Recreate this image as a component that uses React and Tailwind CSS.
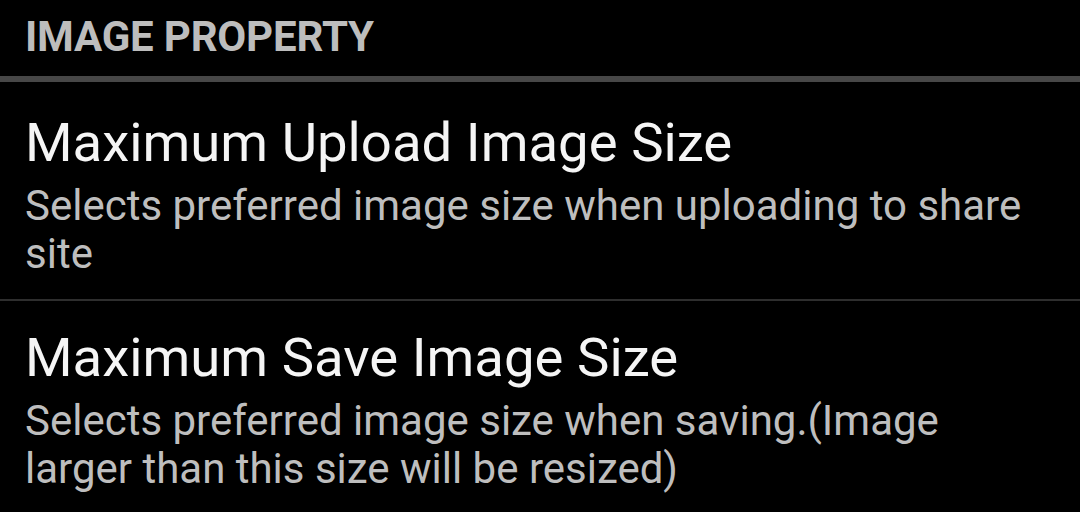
export default function App() {
  const items = [
    {
      title: 'Maximum Upload Image Size',
      summary: 'Selects preferred image size when uploading to share site',
    },
    {
      title: 'Maximum Save Image Size',
      summary: 'Selects preferred image size when saving.(Image larger than this size will be resized)',
    },
  ]

  return (
    <div className="h-[512px] w-[1080px] overflow-hidden bg-black" style={{ fontFamily: 'Roboto, sans-serif' }}>
      {/* category header */}
      <div className="flex h-[76px] items-center px-[25px] pb-[2px]">
        <span className="text-[42px] font-bold leading-none tracking-[-0.2px] text-[#bdbdbd]">IMAGE PROPERTY</span>
      </div>
      <div className="h-[6px] bg-[#474747]" />

      {items.map((item, i) => (
        <div key={item.title}>
          {i > 0 && <div className="h-[2px] bg-[#2e2e2e]" />}
          <div className={i === 0 ? 'pl-[25px] pr-[30px] pt-[27px] pb-[21px]' : 'pl-[25px] pr-[30px] pt-[23px] pb-[21px]'}>
            <div className="text-[54.5px] leading-[66px] text-[#f5f5f5]">{item.title}</div>
            <div className="mt-[7px] text-[42px] leading-[48px] text-[#bebebe]">{item.summary}</div>
          </div>
        </div>
      ))}
    </div>
  )
}
